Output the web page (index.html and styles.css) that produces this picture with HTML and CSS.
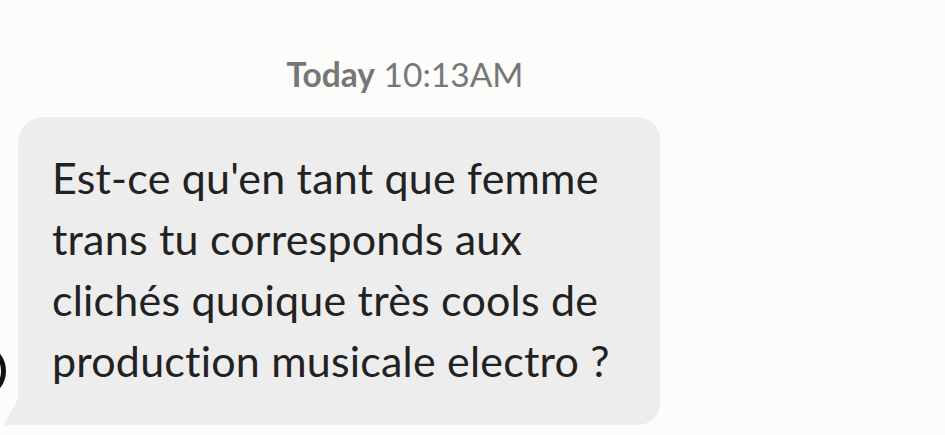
FILE: index.html
```html
<html>
<head>
<link rel="stylesheet" href="styles.css">
</head>
<body>
<div class="thread">
	<div class="stamp"><b>Today</b> 10:13AM</div>
	<div class="row">
		<div class="avatar"></div>
		<div class="bubble">Est-ce qu'en tant que femme<br>trans tu corresponds aux<br>clichés quoique très cools de<br>production musicale electro ?</div>
	</div>
</div>
</body>
</html>
```

FILE: styles.css
```css
body {
	margin: 0;
	background-color: #fcfcfa;
	font-family: Lato, "Noto Sans", sans-serif;
	font-variant-ligatures: none;
	overflow: hidden;
}

.thread {
	width: 810px;
	padding-top: 52px;
}

.stamp {
	text-align: center;
	color: #777;
	font-size: 33.5px;
	line-height: 44px;
}

.stamp b {
	font-weight: 700;
}

.row {
	position: relative;
	margin-top: 21px;
	padding-left: 18px;
}

.avatar {
	position: absolute;
	left: -50px;
	top: 226px;
	width: 46px;
	height: 46px;
	border: 5px solid #111;
	border-radius: 50%;
	background: #fff;
}

.bubble {
	position: relative;
	display: inline-block;
	background-color: #ededed;
	color: #222;
	font-size: 43px;
	letter-spacing: 0.2px;
	line-height: 61px;
	padding: 30px 34px 34px 34px;
	border-radius: 26px 22px 22px 4px;
	width: 574px;
}

.bubble::before {
	content: "";
	position: absolute;
	left: -14px;
	bottom: 0;
	width: 16px;
	height: 30px;
	background-color: #ededed;
	clip-path: polygon(100% 0, 100% 100%, 0 100%);
}
```
